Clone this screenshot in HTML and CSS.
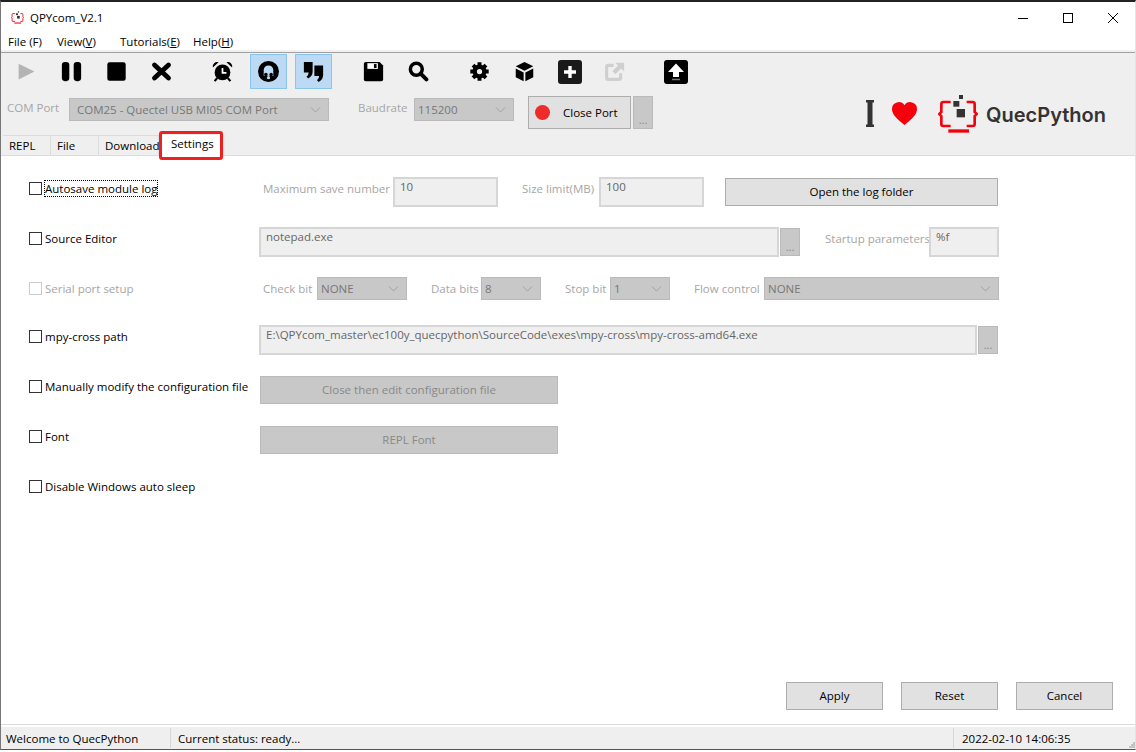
FILE: index.html
```html
<!DOCTYPE html>
<html lang="en">
<head>
    <meta charset="UTF-8">
    <title>QPYcom_V2.1</title>
    <link rel="stylesheet" href="styles.css">
</head>
<body>
<svg class="defs" width="0" height="0">
    <symbol id="quec" viewBox="0 0 120 120">
        <path d="M38 24H16q-6 0-6 6v24l-6 6 6 6v24q0 6 6 6h22M86 24h18q6 0 6 6v24l6 6-6 6v24q0 6-6 6H86" fill="none" stroke="#f5000d" stroke-width="8"/>
        <rect x="63" y="3" width="12" height="12" fill="#333"/>
        <rect x="46" y="21" width="18" height="17" fill="#333"/>
        <rect x="56" y="45" width="25" height="25" fill="#333"/>
        <rect x="31" y="106" width="62" height="10" fill="#f5000d"/>
    </symbol>
</svg>
<div class="window">
    <div class="titlebar">
        <svg class="title-icon"><use href="#quec"/></svg>
        <span class="title-text">QPYcom_V2.1</span>
        <div class="win-controls">
            <svg width="12" height="12" viewBox="0 0 12 12"><path d="M1 6.5h10" stroke="#000"/></svg>
            <svg width="12" height="12" viewBox="0 0 12 12"><rect x="1.5" y="1.5" width="9" height="9" fill="none" stroke="#000"/></svg>
            <svg width="12" height="12" viewBox="0 0 12 12"><path d="M1 1l10 10M11 1L1 11" stroke="#000"/></svg>
        </div>
    </div>

    <nav class="menu">
        <a class="menu-file">File (F)</a>
        <a class="menu-view">View(<u>V</u>)</a>
        <a class="menu-tutorials">Tutorials(<u>E</u>)</a>
        <a>Help(<u>H</u>)</a>
    </nav>

    <div class="toolbar">
        <div class="tools">
            <button class="tool"><svg viewBox="0 0 24 24"><path d="M3 3l18 9-18 9z" fill="#b4b4b4"/></svg></button>
            <button class="tool"><svg viewBox="0 0 24 24"><rect x="1" y="1" width="8.5" height="22" rx="3.5"/><rect x="14.5" y="1" width="8.5" height="22" rx="3.5"/></svg></button>
            <button class="tool"><svg viewBox="0 0 24 24"><rect x="1.5" y="1.5" width="21" height="21" rx="2.5"/></svg></button>
            <button class="tool"><svg viewBox="0 0 24 24"><path d="M4 4.5l16 15M20 4.5l-16 15" stroke="#000" stroke-width="5.5" stroke-linecap="round"/></svg></button>
            <button class="tool tool-gap"><svg viewBox="0 0 24 24"><circle cx="12" cy="13" r="9"/><path d="M12 8v5.5h4.5" fill="none" stroke="#fff" stroke-width="2"/><path d="M1 7.5a5 5 0 0 1 6.5-6zM23 7.5a5 5 0 0 0-6.5-6z"/><path d="M6 19.5l-3 3.5M18 19.5l3 3.5" stroke="#000" stroke-width="2.5"/></svg></button>
            <button class="tool tool-on tool-on-first"><svg viewBox="0 0 24 24"><circle cx="12" cy="12" r="12"/><circle cx="12" cy="10.5" r="5.5" fill="#bcdaf3"/><path d="M6.5 12h11v5h-11z" fill="#bcdaf3"/><circle cx="9" cy="15.5" r="2"/><circle cx="15" cy="15.5" r="2"/><circle cx="12" cy="19" r="1.8" fill="#bcdaf3"/></svg></button>
            <button class="tool tool-on"><svg viewBox="0 0 24 24"><path d="M1 1h10v11q0 5-5 8l-2-2q2.5-2 2.5-5H1z"/><path d="M13 5h10v11q0 5-5 8l-2-2q2.5-2 2.5-5H13z"/></svg></button>
            <button class="tool tool-gap-save"><svg viewBox="0 0 24 24"><path d="M3 1h16l4 4v16q0 2-2 2H3q-2 0-2-2V3q0-2 2-2z"/><rect x="5" y="2.5" width="12" height="6.5" fill="#fff"/><rect x="12.5" y="3.5" width="3" height="4.5"/></svg></button>
            <button class="tool"><svg viewBox="0 0 24 24"><circle cx="9.5" cy="9.5" r="6.8" fill="none" stroke="#000" stroke-width="4"/><path d="M14.5 14.5L21 21" stroke="#000" stroke-width="4.5" stroke-linecap="round"/></svg></button>
            <button class="tool tool-gap"><svg viewBox="0 0 24 24"><circle cx="12" cy="12" r="5.5" fill="none" stroke="#000" stroke-width="5"/><path d="M12 1.5v21M1.500 12h21M4.600 4.600l14.800 14.800M19.400 4.600L4.600 19.400" stroke="#000" stroke-width="4.5" stroke-dasharray="4.5 12 4.5"/></svg></button>
            <button class="tool"><svg viewBox="0 0 24 24"><path d="M12 1l10 5-10 5L2 6z"/><path d="M2 8.5l9 4.5v10l-9-4.500zM22 8.500L13 13v10l9-4.500z"/></svg></button>
            <button class="tool tool-lg"><svg viewBox="0 0 24 24"><rect width="24" height="24" rx="3" fill="#1a1a1a"/><path d="M12 6v12M6 12h12" stroke="#fff" stroke-width="3.4"/></svg></button>
            <button class="tool"><svg viewBox="0 0 24 24"><path d="M11 5H5q-2 0-2 2v12q0 2 2 2h12q2 0 2-2v-5" fill="none" stroke="#cfcfcf" stroke-width="3.5"/><path d="M13 2h10v10l-3.500-3.500L13 15l-3.500-3.500L16 5.500z" fill="#cfcfcf"/></svg></button>
            <button class="tool tool-gap tool-lg"><svg viewBox="0 0 24 24"><rect width="24" height="24" rx="3"/><path d="M12 3.5l8 8.5h-5v5H9v-5H4z" fill="#fff"/><path d="M8 19.5h8" stroke="#777" stroke-width="1.5"/></svg></button>
        </div>

        <div class="port-row">
            <span class="field-label port-label-com">COM Port</span>
            <div class="select port-select-com">COM25 - Quectel USB MI05 COM Port<svg class="chevron" viewBox="0 0 10 6"><path d="M.5.5L5 5 9.5.5"/></svg></div>
            <span class="field-label port-label-baud">Baudrate</span>
            <div class="select port-select-baud">115200<svg class="chevron" viewBox="0 0 10 6"><path d="M.5.5L5 5 9.5.5"/></svg></div>
            <button class="btn close-port"><span class="dot"></span>Close Port</button>
            <button class="more more-port">...</button>
            <div class="brand">
                <svg class="brand-cursor" viewBox="0 0 8 27"><path d="M0 0h8v2.5H6.500v22H8V27H0v-2.5h1.500v-22H0z" fill="#333"/></svg>
                <svg class="brand-heart" viewBox="0 0 25 23"><path d="M12.5 23C5 17 0 12.5 0 7a6.800 6.800 0 0 1 12.500-3.800A6.800 6.800 0 0 1 25 7c0 5.500-5 10-12.500 16z" fill="#f5000d"/></svg>
                <svg class="brand-logo"><use href="#quec"/></svg>
                <span class="brand-name">QuecPython</span>
            </div>
        </div>

        <div class="tabs">
            <a class="tab tab-repl">REPL</a>
            <a class="tab tab-file">File</a>
            <a class="tab tab-download">Download</a>
            <a class="tab tab-active">Settings</a>
        </div>
    </div>

    <main class="pane">
        <div class="row">
            <label class="check"><input type="checkbox"><span class="focused">Autosave module log</span></label>
            <div class="controls">
                <span class="field-label ml-4 w-130">Maximum save number</span>
                <div class="input w-105">10</div>
                <span class="field-label ml-24 w-77">Size limit(MB)</span>
                <div class="input w-105">100</div>
                <button class="btn log-folder">Open the log folder</button>
            </div>
        </div>

        <div class="row">
            <label class="check"><input type="checkbox">Source Editor</label>
            <div class="controls">
                <div class="input w-520">notepad.exe</div>
                <button class="more">...</button>
                <span class="field-label ml-25 w-104">Startup parameters</span>
                <div class="input w-70">%f</div>
            </div>
        </div>

        <div class="row">
            <label class="check check-off"><input type="checkbox" disabled>Serial port setup</label>
            <div class="controls controls-flat">
                <span class="field-label ml-4 w-54">Check bit</span>
                <div class="select w-90">NONE<svg class="chevron" viewBox="0 0 10 6"><path d="M.5.5L5 5 9.5.5"/></svg></div>
                <span class="field-label ml-24 w-50">Data bits</span>
                <div class="select w-60">8<svg class="chevron" viewBox="0 0 10 6"><path d="M.5.5L5 5 9.5.5"/></svg></div>
                <span class="field-label ml-24 w-45">Stop bit</span>
                <div class="select w-60">1<svg class="chevron" viewBox="0 0 10 6"><path d="M.5.5L5 5 9.5.5"/></svg></div>
                <span class="field-label ml-24 w-70">Flow control</span>
                <div class="select w-235">NONE<svg class="chevron" viewBox="0 0 10 6"><path d="M.5.5L5 5 9.5.5"/></svg></div>
            </div>
        </div>

        <div class="row row-short">
            <label class="check"><input type="checkbox">mpy-cross path</label>
            <div class="controls">
                <div class="input w-718">E:\QPYcom_master\ec100y_quecpython\SourceCode\exes\mpy-cross\mpy-cross-amd64.exe</div>
                <button class="more">...</button>
            </div>
        </div>

        <div class="row">
            <label class="check"><input type="checkbox">Manually modify the configuration file</label>
            <div class="controls">
                <button class="btn btn-off wide">Close then edit configuration file</button>
            </div>
        </div>

        <div class="row">
            <label class="check"><input type="checkbox">Font</label>
            <div class="controls">
                <button class="btn btn-off wide">REPL Font</button>
            </div>
        </div>

        <div class="row">
            <label class="check"><input type="checkbox">Disable Windows auto sleep</label>
        </div>

        <div class="actions">
            <button class="btn action">Apply</button>
            <button class="btn action">Reset</button>
            <button class="btn action">Cancel</button>
        </div>
    </main>

    <footer class="statusbar">
        <span class="status status-welcome">Welcome to QuecPython</span>
        <span class="status status-current">Current status: ready...</span>
        <span class="status status-time">2022-02-10 14:06:35
            <svg class="grip" viewBox="0 0 6 6"><path d="M4 0h2v2H4zM2 2h2v2H2zM4 2h2v2H4zM0 4h2v2H0zM2 4h2v2H2zM4 4h2v2H4z" fill="#c4c4c4"/></svg>
        </span>
    </footer>
</div>
</body>
</html>
```

FILE: styles.css
```css
* {
    margin: 0;
    padding: 0;
    box-sizing: border-box;
}

body {
    font-family: 'Open Sans', 'Noto Sans', sans-serif;
    font-size: 11.5px;
    color: #000;
    background: #fff;
}

button {
    font: inherit;
}

.defs {
    display: block;
    height: 0;
}

.window {
    height: 750px;
    display: flex;
    flex-direction: column;
    border-top: 2px solid #222;
    border-left: 1px solid #777;
    border-right: 1px solid #e4e4e4;
    border-bottom: 1px solid #555;
    overflow: hidden;
}

/* Title and menu */
.titlebar {
    height: 31px;
    display: flex;
    align-items: center;
    padding-left: 10px;
}

.title-icon {
    width: 13px;
    height: 13px;
}

.title-text {
    margin: 0 0 1px 6px;
}

.win-controls {
    margin-left: auto;
    display: flex;
    gap: 33px;
    padding-right: 16px;
}

.menu {
    height: 19px;
    display: flex;
    align-items: center;
    padding-left: 7px;
    border-bottom: 2px solid #f0f0f0;
}

.menu-file {
    width: 49px;
}

.menu-view {
    width: 63px;
}

.menu-tutorials {
    width: 73px;
}

/* Toolbar */
.toolbar {
    height: 103px;
    background: #efefef;
    border-top: 1px solid #a0a0a0;
}

.tools {
    height: 35px;
    margin-top: 1px;
    display: flex;
    gap: 8px;
    padding-left: 7px;
}

.tool {
    width: 37px;
    height: 35px;
    display: flex;
    align-items: center;
    justify-content: center;
    background: none;
    border: 1px solid transparent;
}

.tool svg {
    width: 21px;
    height: 21px;
}

.tool-lg svg {
    width: 24px;
    height: 24px;
}

.tool-gap {
    margin-left: 16px;
}

.tool-gap-save {
    margin-left: 15px;
}

.tool-on {
    background: #bcdaf3;
    border-color: #8cc4f0;
}

.tool-on-first {
    margin-left: 1px;
}

.port-row {
    height: 33px;
    margin-top: 7px;
    display: flex;
    align-items: flex-start;
    padding-left: 6px;
}

.field-label {
    color: #a6a6a6;
    white-space: nowrap;
}

.port-label-com {
    width: 62px;
    margin-top: 4px;
}

.port-label-baud {
    width: 56px;
    margin-left: 29px;
    margin-top: 4px;
}

.port-select-com {
    width: 260px;
    margin-top: 2px;
    padding-left: 7px;
}

.port-select-baud {
    width: 100px;
    margin-top: 2px;
}

.select {
    height: 23px;
    display: flex;
    align-items: center;
    justify-content: space-between;
    color: #777;
    background: #c8c8c8;
    border: 1px solid #bababa;
    padding-right: 7px;
    white-space: nowrap;
}

.select:not(.port-select-com) {
    padding-left: 3px;
}

.chevron {
    width: 11px;
    height: 6px;
    fill: none;
    stroke: #a0a0a0;
}

.btn {
    height: 28px;
    padding-bottom: 1px;
    background: #e1e1e1;
    border: 1px solid #adadad;
    color: #000;
    white-space: nowrap;
}

.btn-off {
    background: #c8c8c8;
    border-color: #bababa;
    color: #888;
}

.close-port {
    width: 103px;
    height: 33px;
    margin-left: 14px;
    display: flex;
    align-items: center;
    padding-left: 6px;
}

.dot {
    width: 15px;
    height: 15px;
    margin-right: 13px;
    border-radius: 50%;
    background: #ee2a2a;
}

.more {
    width: 20px;
    height: 28px;
    margin-left: 1px;
    display: flex;
    align-items: flex-end;
    justify-content: center;
    padding-bottom: 2px;
    background: #c8c8c8;
    border: 1px solid #bababa;
    color: #888;
    font-size: 11px;
    line-height: 12px;
}

.more-port {
    height: 33px;
    margin-left: 2px;
}

.brand {
    margin-left: auto;
    padding-right: 29px;
    display: flex;
    align-items: flex-start;
}

.brand-cursor {
    width: 8px;
    height: 27px;
    margin-top: 4px;
}

.brand-heart {
    width: 25px;
    height: 23px;
    margin: 6px 0 0 18px;
}

.brand-logo {
    width: 40px;
    height: 40px;
    margin: -2px 0 0 21px;
    flex: none;
}

.brand-name {
    margin: 4px 0 0 8px;
    font-family: Inter, sans-serif;
    font-size: 20px;
    font-weight: 600;
    line-height: 30px;
    color: #333;
}

/* Tabs */
.tabs {
    height: 21px;
    margin-top: 6px;
    display: flex;
    padding-left: 2px;
}

.tab {
    height: 21px;
    line-height: 20px;
    padding-left: 6px;
    border: 1px solid #dcdcdc;
    border-left: 0;
    border-bottom: 0;
}

.tab-repl,
.tab-file {
    width: 48px;
}

.tab-download {
    width: 60px;
    white-space: nowrap;
}

.tab-active {
    position: relative;
    width: 64px;
    padding-left: 12px;
    line-height: 17px;
    background: #fff;
    border: 0;
}

.tab-active::after {
    content: "";
    position: absolute;
    top: -4px;
    bottom: -4px;
    left: 0;
    right: 0;
    border: 3px solid #f02020;
    border-radius: 3px;
}

/* Settings pane */
.pane {
    flex: 1;
    display: flex;
    flex-direction: column;
    padding: 8px 0 14px 28px;
    border-top: 1px solid #dcdcdc;
    border-bottom: 1px solid #dcdcdc;
}

.row {
    height: 50px;
    flex: none;
    display: flex;
    align-items: center;
}

.row-short {
    height: 48px;
}

.row-short .check {
    margin-bottom: 3px;
}

.row-short .controls {
    margin-top: 4px;
}

.check {
    width: 230px;
    flex: none;
    display: flex;
    align-items: center;
    margin-bottom: 2px;
    white-space: nowrap;
}

.check input {
    appearance: none;
    width: 13px;
    height: 13px;
    margin-right: 3px;
    background: #fff;
    border: 1px solid #333;
}

.check-off {
    color: #a6a6a6;
}

.check-off input {
    border-color: #ccc;
}

.focused {
    outline: 1px dotted #000;
}

.controls {
    display: flex;
    align-items: center;
    margin-top: 6px;
}

.controls > .field-label {
    margin-top: -8px;
}

.controls-flat {
    margin: 0 0 1px;
}

.controls-flat > .field-label {
    margin-top: 0;
}

.input {
    height: 30px;
    padding-left: 5px;
    background: #efefef;
    border: 2px solid #d6d6d6;
    color: #666;
    white-space: nowrap;
}

.ml-4 { margin-left: 4px; }
.ml-24 { margin-left: 24px; }
.ml-25 { margin-left: 25px; }
.w-45 { width: 45px; }
.w-50 { width: 50px; }
.w-54 { width: 54px; }
.w-60 { width: 60px; }
.w-70 { width: 70px; }
.w-77 { width: 77px; }
.w-90 { width: 90px; }
.w-104 { width: 104px; }
.w-105 { width: 105px; }
.w-130 { width: 130px; }
.w-235 { width: 235px; }
.w-520 { width: 520px; }
.w-718 { width: 718px; }

.log-folder {
    width: 273px;
    margin-left: 21px;
}

.wide {
    width: 298px;
    margin-left: 1px;
}

.actions {
    margin-top: auto;
    display: flex;
    justify-content: flex-end;
    gap: 18px;
    padding-right: 22px;
}

.action {
    width: 97px;
}

/* Status bar */
.statusbar {
    height: 24px;
    display: flex;
    align-items: center;
    background: #efefef;
    border-top: 2px solid #fff;
}

.status {
    height: 20px;
    line-height: 21px;
    white-space: nowrap;
}

.status-welcome {
    width: 170px;
    padding-left: 5px;
    border-right: 1px solid #d6d6d6;
}

.status-current {
    flex: 1;
    padding-left: 7px;
}

.status-time {
    position: relative;
    width: 182px;
    padding-left: 8px;
    border-left: 1px solid #d6d6d6;
}

.grip {
    position: absolute;
    right: 0;
    bottom: 0;
    width: 6px;
    height: 6px;
}
```
